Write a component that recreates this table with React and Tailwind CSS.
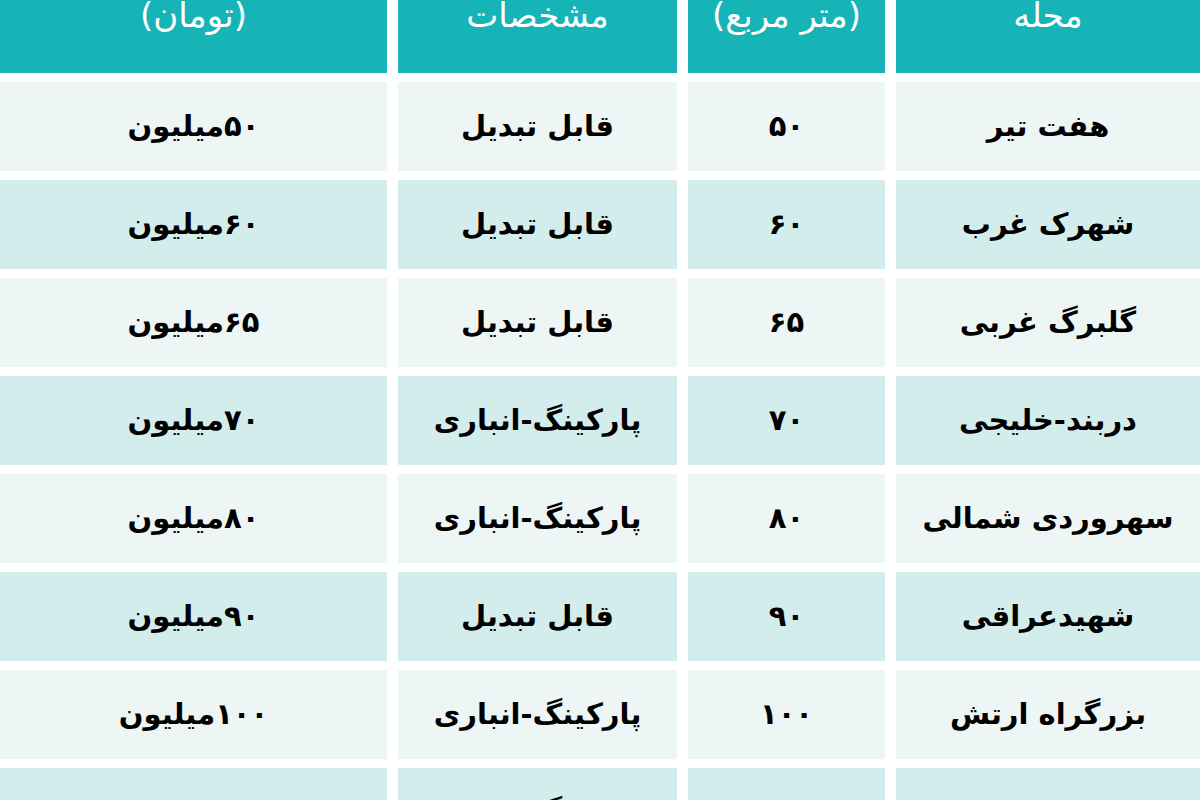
import React from "react";

const rows = [
  ["هفت تیر", "۵۰", "قابل تبدیل", "۵۰میلیون"],
  ["شهرک غرب", "۶۰", "قابل تبدیل", "۶۰میلیون"],
  ["گلبرگ غربی", "۶۵", "قابل تبدیل", "۶۵میلیون"],
  ["دربند-خلیجی", "۷۰", "پارکینگ-انباری", "۷۰میلیون"],
  ["سهروردی شمالی", "۸۰", "پارکینگ-انباری", "۸۰میلیون"],
  ["شهیدعراقی", "۹۰", "قابل تبدیل", "۹۰میلیون"],
  ["بزرگراه ارتش", "۱۰۰", "پارکینگ-انباری", "۱۰۰میلیون"],
  ["فلکه دوم(۳۲)", "۱۱۰", "پارکینگ-انباری", "۱۱۰میلیون"],
];

const headers = [
  ["محله"],
  ["متراژ", "(متر مربع)"],
  ["مشخصات"],
  ["قیمت", "(تومان)"],
];

export default function App() {
  return (
    <div
      dir="rtl"
      className="w-[1200px] h-[800px] overflow-hidden bg-white"
      style={{ fontFamily: '"DejaVu Sans", sans-serif' }}
    >
      <div className="-mt-[50px] grid grid-cols-[1fr_197px_279px_387px] gap-x-[11px] gap-y-[9px]">
        {headers.map((h, i) => (
          <div
            key={i}
            className="h-[123px] bg-[#16b4b6] flex flex-col justify-end items-center pb-[36px] text-white text-[34px] leading-[44px]"
          >
            {h.map((t, j) => (
              <div key={j}>{t}</div>
            ))}
          </div>
        ))}
        {rows.map((r, ri) =>
          r.map((c, ci) => (
            <div
              key={ri + "-" + ci}
              className={
                "h-[89px] flex items-center justify-center text-black font-bold text-[29px] " +
                (ri % 2 === 0 ? "bg-[#edf5f5]" : "bg-[#d3ecec]")
              }
            >
              {c}
            </div>
          ))
        )}
      </div>
    </div>
  );
}
